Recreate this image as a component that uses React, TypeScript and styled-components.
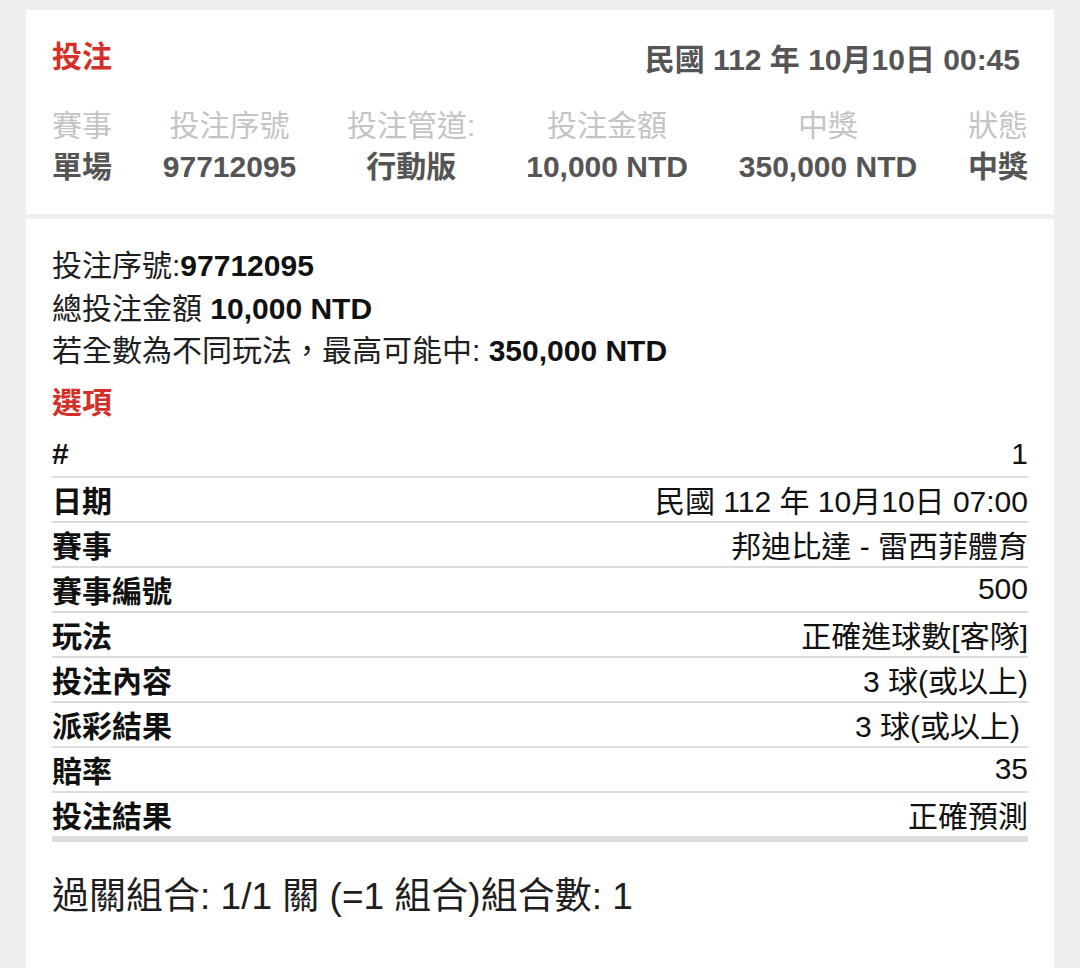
import React from "react";
import styled, { createGlobalStyle } from "styled-components";

const GlobalStyle = createGlobalStyle`
  html, body { margin: 0; padding: 0; background: #eeeeee; }
  body { font-family: "Liberation Sans", "Noto Sans CJK TC", sans-serif; }
`;

const Page = styled.div`
  display: flex;
  flex-direction: column;
  gap: 5px;
  padding: 10px 26px 0;
  min-height: 968px;
  box-sizing: border-box;
`;

const Card = styled.section<{ $grow?: boolean }>`
  background: #ffffff;
  padding: ${(p) => (p.$grow ? "26px 26px 40px" : "27px 26px 26px")};
  flex: ${(p) => (p.$grow ? "1" : "none")};
`;

const HeaderRow = styled.div`
  display: flex;
  justify-content: space-between;
  align-items: center;
  height: 40px;
  padding-right: 8px;
`;

const Title = styled.h2`
  margin: 0;
  font-size: 30px;
  font-weight: 700;
  color: #d3302a;
  line-height: 44px;
`;

const HeaderDate = styled.div`
  font-size: 30px;
  font-weight: 700;
  color: #555555;
`;

const Summary = styled.div`
  display: flex;
  justify-content: space-between;
  margin-top: 29px;
`;

const SummaryCol = styled.div`
  display: flex;
  flex-direction: column;
  align-items: center;
  font-size: 30px;
  font-weight: 700;
`;

const SummaryLabel = styled.div`
  color: #c4c4c4;
  line-height: 40px;
  font-weight: 400;
`;

const SummaryValue = styled.div`
  color: #555555;
  line-height: 42px;
`;

const InfoLine = styled.div`
  font-size: 30px;
  line-height: 42.5px;
  color: #1e1e1e;
  b { font-weight: 700; color: #111; }
`;

const Section = styled.h3`
  margin: 8px 0 8px;
  font-size: 30px;
  font-weight: 700;
  color: #d3302a;
  line-height: 44px;
`;

const Table = styled.div`
  display: flex;
  flex-direction: column;
  border-bottom: 6px solid #dddddd;
`;

const Row = styled.div`
  display: flex;
  justify-content: space-between;
  align-items: center;
  height: 43px;
  font-size: 30px;
  color: #111111;
  & + & { border-top: 2px solid #dddddd; }
`;

const RowLabel = styled.div`
  font-weight: 700;
`;

const RowValue = styled.div<{ $pad?: number }>`
  font-weight: 400;
  padding-right: ${(p) => p.$pad ?? 0}px;
`;

const Footer = styled.div`
  margin-top: 32px;
  font-size: 37px;
  line-height: 46px;
  color: #1e1e1e;
  white-space: nowrap;
`;

const summary = [
  ["賽事", "單場"],
  ["投注序號", "97712095"],
  ["投注管道:", "行動版"],
  ["投注金額", "10,000 NTD"],
  ["中獎", "350,000 NTD"],
  ["狀態", "中獎"],
];

const rows: [string, string, number?][] = [
  ["#", "1"],
  ["日期", "民國 112 年 10月10日 07:00"],
  ["賽事", "邦迪比達 - 雷西菲體育"],
  ["賽事編號", "500"],
  ["玩法", "正確進球數[客隊]"],
  ["投注內容", "3 球(或以上)"],
  ["派彩結果", "3 球(或以上)", 8],
  ["賠率", "35"],
  ["投注結果", "正確預測"],
];

export default function App() {
  return (
    <>
      <GlobalStyle />
      <Page>
        <Card>
          <HeaderRow>
            <Title>投注</Title>
            <HeaderDate>民國 112 年 10月10日 00:45</HeaderDate>
          </HeaderRow>
          <Summary>
            {summary.map(([l, v]) => (
              <SummaryCol key={l}>
                <SummaryLabel>{l}</SummaryLabel>
                <SummaryValue>{v}</SummaryValue>
              </SummaryCol>
            ))}
          </Summary>
        </Card>
        <Card $grow>
          <InfoLine>
            投注序號:<b>97712095</b>
          </InfoLine>
          <InfoLine>
            總投注金額 <b>10,000 NTD</b>
          </InfoLine>
          <InfoLine>
            若全數為不同玩法，最高可能中: <b>350,000 NTD</b>
          </InfoLine>
          <Section>選項</Section>
          <Table>
            {rows.map(([l, v, pad]) => (
              <Row key={l}>
                <RowLabel>{l}</RowLabel>
                <RowValue $pad={pad}>{v}</RowValue>
              </Row>
            ))}
          </Table>
          <Footer>過關組合: 1/1 關 (=1 組合)組合數: 1</Footer>
        </Card>
      </Page>
    </>
  );
}
